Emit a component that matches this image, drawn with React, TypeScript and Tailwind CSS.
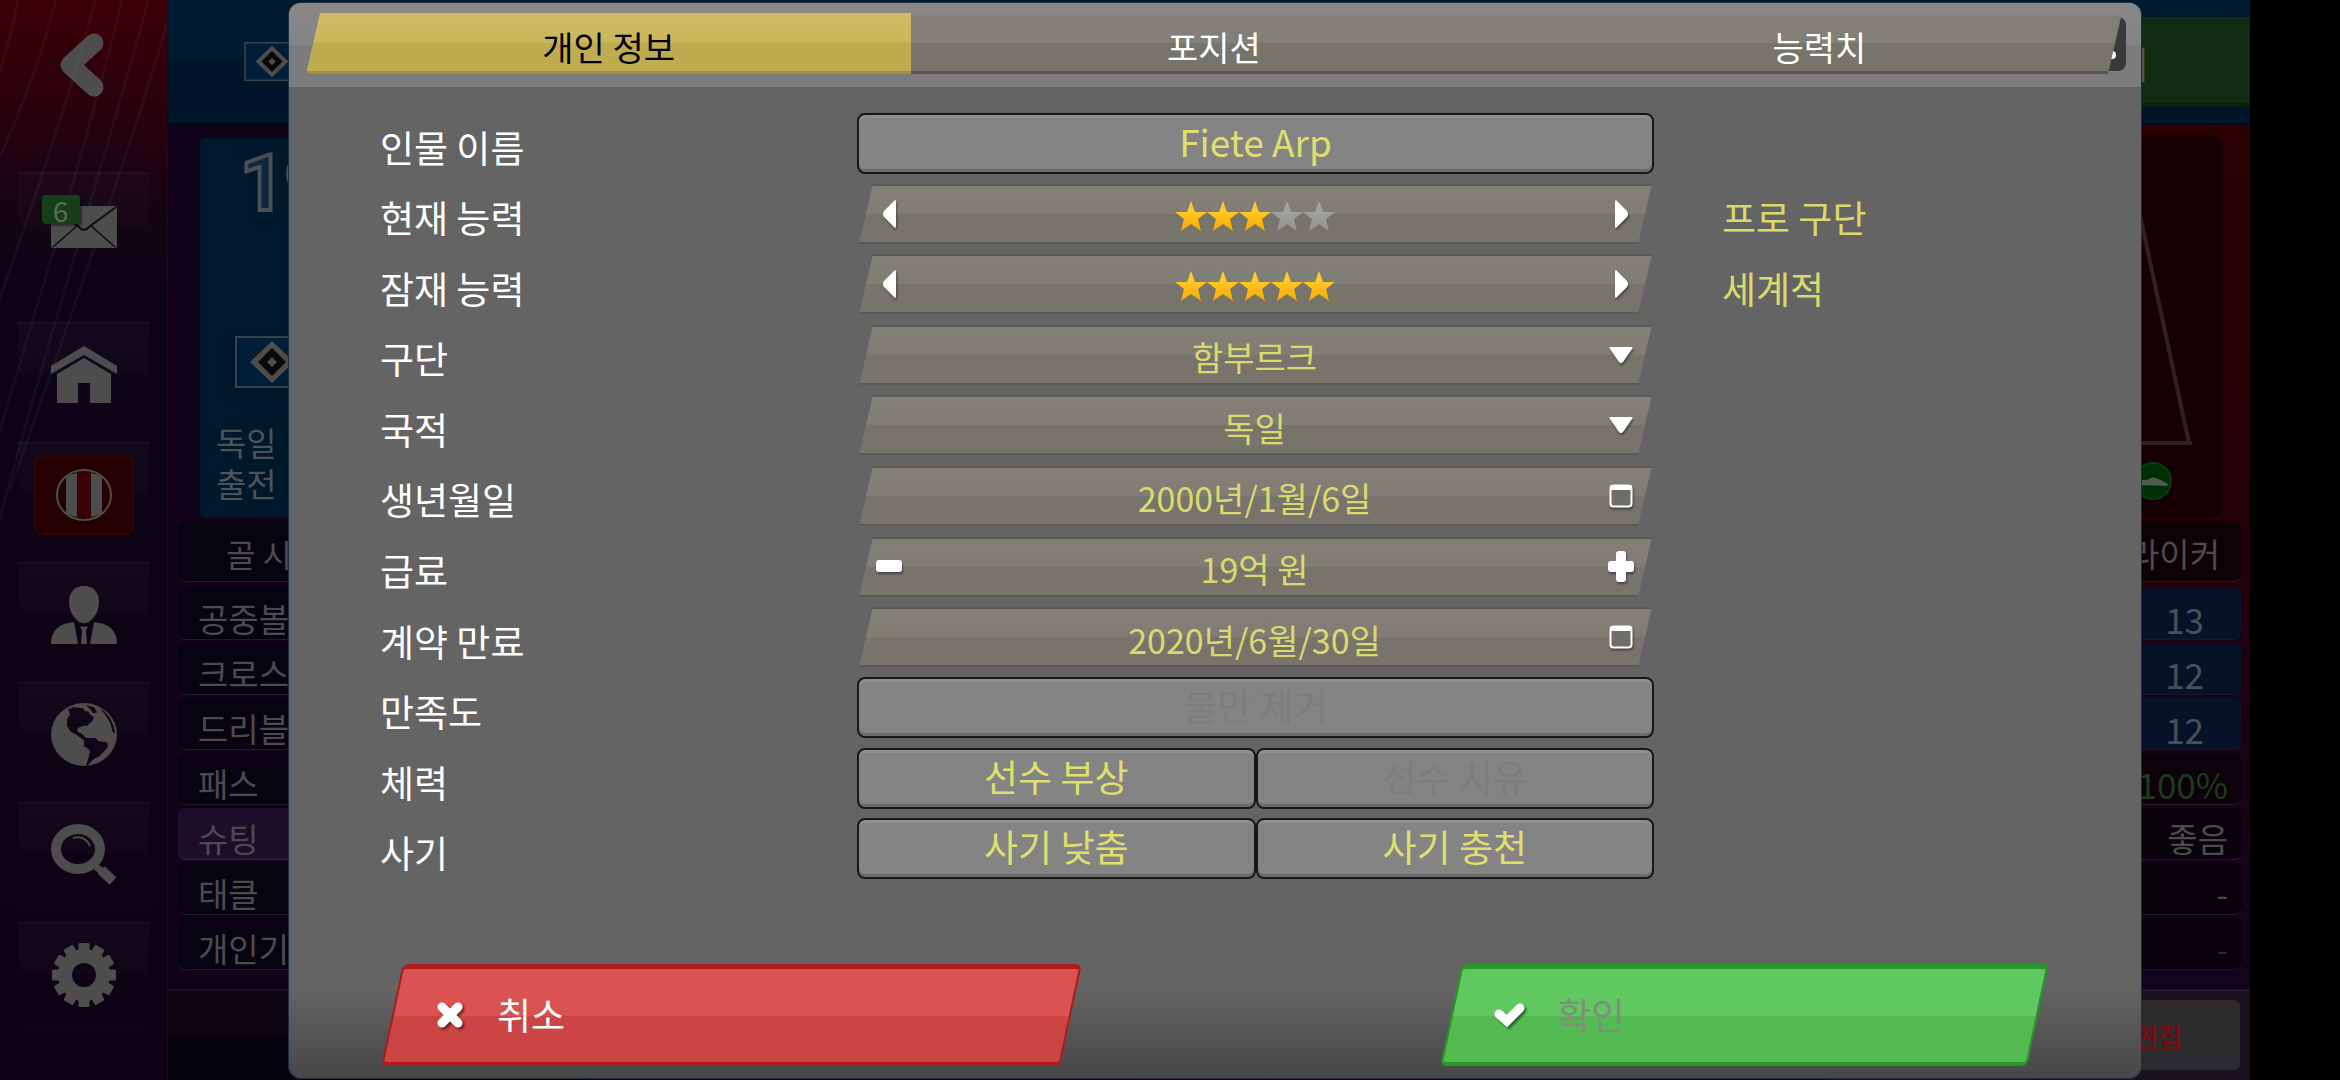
import { useState } from "react";
import type { ReactNode } from "react";

const TABS = ["개인 정보", "포지션", "능력치"];

const LEFT_STATS = ["공중볼", "크로스", "드리블", "패스", "슈팅", "태클", "개인기"];

const RIGHT_STATS = [
  { value: "13", kind: "score" },
  { value: "12", kind: "score" },
  { value: "12", kind: "score" },
  { value: "100%", kind: "good" },
  { value: "좋음", kind: "text" },
  { value: "-", kind: "text" },
  { value: "-", kind: "faint" },
];

/* ---------- icons ---------- */

function BackIcon() {
  return (
    <svg width="48" height="66" viewBox="0 0 48 66" fill="none">
      <path
        d="M36 11 L12 33 L36 55"
        stroke="#4d4d4d"
        strokeWidth="19"
        strokeLinecap="round"
        strokeLinejoin="round"
      />
    </svg>
  );
}

function MailIcon() {
  return (
    <svg width="66" height="42" viewBox="0 0 66 42">
      <rect width="66" height="42" rx="2" fill="#4d4d4d" />
      <path d="M2 41 L27 19 M64 41 L39 19" stroke="#120818" strokeWidth="1.500" />
      <path d="M1 1 L28 21 Q33 27 38 21 L65 1" stroke="#120818" strokeWidth="2" fill="none" />
    </svg>
  );
}

function HomeIcon() {
  return (
    <svg width="66" height="57" viewBox="0 0 66 57" fill="#4d4d4d">
      <path d="M0 20 L33 0 L66 20 V28 L33 9 L0 28 Z" />
      <path d="M6 28 L33 12 L60 28 V57 H39 V37 H27 V57 H6 Z" />
    </svg>
  );
}

function ClubIcon() {
  return (
    <svg width="58" height="54" viewBox="0 0 58 54">
      <ellipse cx="29" cy="27" rx="27" ry="25" fill="none" stroke="#4d4d4d" strokeWidth="2" />
      <path d="M11 9 Q16 6 22 5 V49 Q16 48 11 45 Z" fill="#4d4d4d" />
      <path d="M47 9 Q42 6 36 5 V49 Q42 48 47 45 Z" fill="#4d4d4d" />
      <path d="M23 4 H35 V50 H23 Z" fill="#3a0204" />
    </svg>
  );
}

function PersonIcon() {
  return (
    <svg width="66" height="58" viewBox="0 0 66 56" preserveAspectRatio="none" fill="#4d4d4d">
      <path d="M33 0 C43 0 48 7 48 15 C48 25 41 36 33 36 C25 36 18 25 18 15 C18 7 23 0 33 0 Z" />
      <path d="M0 56 C0 44 7 36 23 35 L27 56 Z" />
      <path d="M66 56 C66 44 59 36 43 35 L39 56 Z" />
      <path d="M29 39 H37 L35 43 L36 56 H30 L31 43 Z" />
    </svg>
  );
}

function GlobeIcon() {
  return (
    <svg width="66" height="63" viewBox="0 0 66 61" preserveAspectRatio="none">
      <ellipse cx="33" cy="30.500" rx="33" ry="30.500" fill="#4d4d4d" />
      <path
        d="M17 6 L22 4 L32 5 L34 8 L37 8 L39 11 L43 14 L41 18 L36 22 L33 22 L27 24 L26 27 L31 30 L35 34 L44 34 L48 37 L56 38 L57 42 L53 47 L48 52 L43 54 L38 59 L35 61 L37 55 L39 47 L37 44 L33 42 L33 36 L27 32 L19 27 L16 22 L16 16 L19 11 Z"
        fill="#100616"
      />
      <path d="M35 2 L43 4 L46 9 L42 10 L40 7 Z" fill="#100616" />
      <path d="M49 5 C57 10 63 18 64 30 L61 27 C61 20 56 13 49 5 Z" fill="#100616" />
    </svg>
  );
}

function SearchIcon() {
  return (
    <svg width="66" height="61" viewBox="0 0 66 61">
      <ellipse cx="27" cy="25" rx="22" ry="20" fill="none" stroke="#4d4d4d" strokeWidth="10" />
      <path d="M22 14 Q34 11 39 22" fill="none" stroke="#4d4d4d" strokeWidth="2" />
      <path d="M45 43 L52 48" stroke="#4d4d4d" strokeWidth="7" />
      <path d="M50 46 L62 57" stroke="#4d4d4d" strokeWidth="10" />
    </svg>
  );
}

function GearIcon() {
  return (
    <svg width="66" height="64" viewBox="-33 -32 66 64">
      <circle r="19" fill="none" stroke="#4d4d4d" strokeWidth="14" />
      {Array.from({ length: 12 }, (_, i) => (
        <rect
          key={i}
          x="-5.500"
          y="-32"
          width="11"
          height="12"
          rx="1.500"
          fill="#4d4d4d"
          transform={`rotate(${i * 30})`}
        />
      ))}
    </svg>
  );
}

function Crest({ className }: { className: string }) {
  return (
    <svg className={className} viewBox="0 0 74 52">
      <rect x="1" y="1" width="72" height="50" fill="#001e38" stroke="#4a4f55" strokeWidth="1.500" />
      <path d="M37 5 L59 26 L37 47 L15 26 Z" fill="#4d4d4d" />
      <path d="M37 12 L51 26 L37 40 L23 26 Z" fill="#080808" />
      <path d="M37 21 L42 26 L37 31 L32 26 Z" fill="#4d4d4d" />
    </svg>
  );
}

function Star({ filled }: { filled: boolean }) {
  return (
    <svg width="32" height="30" viewBox="0 0 32 30">
      <path
        d="M16 0 L20 11 L32 11 L23 18 L26 30 L16 23 L6 30 L9 18 L0 11 L12 11 Z"
        fill={filled ? "url(#starOn)" : "url(#starOff)"}
      />
    </svg>
  );
}

function ArrowIcon({ flip = false }: { flip?: boolean }) {
  return (
    <svg width="13" height="28" viewBox="0 0 13 28" className="drop-shadow-[1px_2px_1px_rgba(0,0,0,0.4)]">
      <path
        d={flip ? "M1 0 Q0 0 0 2 V26 Q0 28 1 28 L12 17 Q14 14 12 11 Z" : "M12 0 Q13 0 13 2 V26 Q13 28 12 28 L1 17 Q-1 14 1 11 Z"}
        fill="#fff"
      />
    </svg>
  );
}

function DownIcon() {
  return (
    <svg width="24" height="16" viewBox="0 0 24 16" className="drop-shadow-[1px_2px_1px_rgba(0,0,0,0.4)]">
      <path d="M1 0 H23 Q24 1 23 2 L14 15 Q12 17 10 15 L1 2 Q0 1 1 0 Z" fill="#fff" />
    </svg>
  );
}

function CalendarIcon() {
  return (
    <svg width="24" height="24" viewBox="0 0 24 24" className="drop-shadow-[1px_2px_1px_rgba(0,0,0,0.4)]">
      <rect x="1.500" y="1.500" width="21" height="21" rx="3" fill="#6f6d67" stroke="#fff" strokeWidth="2" />
      <path d="M1 6 V3 Q1 1 3 1 H21 Q23 1 23 3 V6 Z" fill="#fff" />
    </svg>
  );
}

function MinusIcon() {
  return (
    <svg width="26" height="13" viewBox="0 0 26 13" className="drop-shadow-[1px_2px_1px_rgba(0,0,0,0.4)]">
      <rect width="26" height="12" rx="3" fill="#fff" />
    </svg>
  );
}

function PlusIcon() {
  return (
    <svg width="26" height="31" viewBox="0 0 26 31" className="drop-shadow-[1px_2px_1px_rgba(0,0,0,0.4)]">
      <rect y="10" width="26" height="11" rx="3" fill="#fff" />
      <rect x="8" width="10" height="31" rx="3" fill="#fff" />
    </svg>
  );
}

/* ---------- screen behind the dialog ---------- */

const NAV = [
  { label: "홈", icon: <HomeIcon /> },
  { label: "구단", icon: <ClubIcon />, active: true },
  { label: "인물", icon: <PersonIcon /> },
  { label: "세계", icon: <GlobeIcon /> },
  { label: "검색", icon: <SearchIcon /> },
  { label: "설정", icon: <GearIcon /> },
];

const navItem =
  "flex w-full items-center justify-center border-t-2 border-b-2 border-t-white/5 border-b-black/25 bg-[linear-gradient(rgba(255,255,255,0.02)_0%,rgba(255,255,255,0.01)_50%,transparent_50%)]";

function Sidebar() {
  return (
    <nav className="relative flex w-[168px] shrink-0 flex-col overflow-hidden border-r border-[#1a0a22] bg-[linear-gradient(#3c0006_0px,#28020d_120px,#150413_200px,#0c0518_300px,#0d0416_500px,#0d0314_100%)] px-[18px]">
      <svg
        className="pointer-events-none absolute top-0 left-0"
        width="168"
        height="540"
        stroke="#8080a0"
        strokeOpacity="0.08"
        strokeWidth="3"
        fill="none"
      >
        <path d="M20 -10 Q10 45 -10 100" />
        <path d="M58 -10 Q40 70 -6 170" />
        <path d="M98 -10 Q70 100 -6 315" />
        <path d="M124 -10 Q100 100 -6 450" />
        <path d="M151 -10 C120 110 50 330 -6 540" />
        <path d="M168 20 C140 120 70 320 10 490" />
      </svg>
      <div className="flex h-[172px] items-start justify-center pt-8 pr-1">
        <button type="button" aria-label="뒤로">
          <BackIcon />
        </button>
      </div>
      <button type="button" aria-label="메일" className={`${navItem} mb-10 h-[110px]`}>
        <span className="relative">
          <MailIcon />
          <span className="absolute -top-[11px] -left-[9px] flex h-[29px] w-[38px] items-center justify-center rounded bg-[#173f17] text-[28px] leading-none text-[#5b685b] shadow-[2px_2px_2px_rgba(0,0,0,0.4)]">
            6
          </span>
        </span>
      </button>
      <div className="flex flex-col gap-[15px]">
        {NAV.map((item) => (
          <button key={item.label} type="button" aria-label={item.label} className={`${navItem} h-[105px]`}>
            {item.active ? (
              <span className="flex h-20 w-[100px] items-center justify-center rounded-lg border-2 border-[#340205] bg-[#250000]">
                {item.icon}
              </span>
            ) : (
              item.icon
            )}
          </button>
        ))}
      </div>
    </nav>
  );
}

function LeftColumn() {
  return (
    <div className="flex w-[420px] flex-col">
      <div className="mt-[13px] ml-8 flex h-[380px] flex-col rounded-md bg-[#00182c]">
        <div className="pt-[6px] pl-10 font-[Roboto,sans-serif] text-[78px] leading-[80px] font-bold text-[#10263a] [-webkit-text-stroke:4px_#484f55]">
          19
        </div>
        <Crest className="mt-28 ml-[35px] h-[52px] w-[74px]" />
        <p className="mt-[34px] pl-4 text-[33px] leading-[41px] text-[#4b5359]">
          독일
          <br />
          출전
        </p>
      </div>
      <div className="mt-[3px] ml-[10px] flex h-[61px] items-center rounded-lg border-b border-white/10 bg-[#080310] pt-1 pl-12 text-[32px] leading-none text-[#4b4b4e]">
        골 시
      </div>
      <ul className="mt-[6px] ml-[10px] flex flex-col gap-[3px]">
        {LEFT_STATS.map((stat) => (
          <li
            key={stat}
            className={`flex h-[52px] items-center rounded-lg border-b border-white/10 pt-[10px] pl-5 text-[33px] leading-none text-[#4b4b4e] ${
              stat === "슈팅" ? "bg-[#1c0e29]" : "bg-[#080310]"
            }`}
          >
            {stat}
          </li>
        ))}
      </ul>
      <div className="mt-auto h-[91px] border-t-2 border-[#17121c] bg-[linear-gradient(#0d0712_50%,#07030c_50%)]" />
    </div>
  );
}

function RightColumn() {
  return (
    <div className="flex w-[420px] flex-col">
      <div className="mt-[11px] mr-[27px] flex h-[382px] justify-end rounded-xl bg-[#160003]">
        <svg width="120" height="382" viewBox="0 0 120 382">
          <path d="M20 0 L86 307 M0 307 H89" stroke="#302124" strokeWidth="4" fill="none" />
          <circle cx="50" cy="345" r="18" fill="#002e05" stroke="#033f0a" strokeWidth="2" />
          <path d="M34 349 V344 L44 344 L50 341 L58 344 L65 348 L64 350 Z" fill="#4d5a4d" />
        </svg>
      </div>
      <div className="mt-[3px] mr-2 flex h-[61px] items-center justify-end rounded-lg border-b border-white/10 bg-[#0e0207] pt-1 pr-[22px] text-[33px] leading-none text-[#4b4b4e]">
        스트라이커
      </div>
      <ul className="mt-[6px] mr-2 flex flex-col gap-[3px]">
        {RIGHT_STATS.map((stat, i) => (
          <li
            key={i}
            className={`flex h-[52px] items-center justify-end rounded-lg border-b pt-[10px] leading-none ${
              stat.kind === "score"
                ? "border-[#0c1a33] bg-[#061228] pr-[38px] text-[35px] text-[#4a4f57]"
                : stat.kind === "good"
                  ? "border-white/10 bg-[#0d0209] pr-[14px] text-[35px] text-[#1d3a1d]"
                  : stat.kind === "faint"
                    ? "border-white/10 bg-[#08020d] pr-[14px] text-[33px] text-[#2e2a31]"
                    : "border-white/10 bg-[#0a020b] pr-[14px] text-[33px] text-[#4b4b4e]"
            }`}
          >
            {stat.value}
          </li>
        ))}
      </ul>
      <div className="mt-auto flex h-[91px] justify-end border-t-2 border-[#221d28] bg-[#18131f] pt-[9px] pr-[10px]">
        <button
          type="button"
          className="flex h-[70px] w-80 items-center justify-end rounded-md bg-[#2c2a2d] pr-[58px] text-[26px] font-medium text-[#7e0c0c]"
        >
          편집
        </button>
      </div>
    </div>
  );
}

function Backdrop() {
  return (
    <div className="flex flex-1">
      <Sidebar />
      <div className="flex flex-1 flex-col bg-[linear-gradient(90deg,#12031a_0%,#12031a_30%,transparent_70%),linear-gradient(#2c0003_12%,#240008_50%,#12041c_85%)]">
        <header className="flex h-[125px] items-start justify-between border-b-2 border-[#000a1c] bg-[linear-gradient(#001a2f_50%,#001529_50%)]">
          <Crest className="mt-[42px] ml-[76px] h-[39px] w-[56px]" />
          <button
            type="button"
            className="mt-[17px] flex h-[90px] w-96 items-center justify-end border-b-4 border-[#0c220d] bg-[#122c13] pt-2 pr-[101px] text-[37px] text-[#4b5a50]"
          >
            닫기
          </button>
        </header>
        <div className="flex flex-1 justify-between">
          <LeftColumn />
          <RightColumn />
        </div>
      </div>
    </div>
  );
}

/* ---------- dialog parts ---------- */

const boxStyle =
  "h-[61px] rounded-lg border-2 border-[#181818] bg-[#848484] pb-1 text-center text-[37px] leading-none text-[#dfdf6e] shadow-[inset_0_3px_0_#8f8f8f,inset_0_-3px_0_#6c6c6c] disabled:text-[#7d7d7d]";

function Row({ label, htmlFor, note, children }: { label: string; htmlFor?: string; note?: string; children: ReactNode }) {
  return (
    <div className="grid grid-cols-[477fr_797fr_487fr] items-center">
      <label htmlFor={htmlFor} className="pt-2 text-[37px] leading-none text-white">
        {label}
      </label>
      {children}
      <span className="pt-2 pl-[68px] text-[37px] leading-none text-[#dada6c]">{note}</span>
    </div>
  );
}

// slanted bar that holds an optional control on each side
function Slant({ left, right, children }: { left?: ReactNode; right?: ReactNode; children: ReactNode }) {
  return (
    <div className="relative isolate mx-[9px] flex h-[60px] items-center text-[34px] text-[#dada6c] before:absolute before:inset-0 before:-z-10 before:-skew-x-[13deg] before:border-y-2 before:border-[#5b5a55] before:bg-[linear-gradient(#838078_0%,#807d75_50%,#77746c_50%,#77746c_100%)]">
      <div className="flex w-[46px] justify-center">{left}</div>
      <div className="flex flex-1 justify-center pt-1">{children}</div>
      <div className="flex w-12 justify-center">{right}</div>
    </div>
  );
}

function StarRow({ label, count, note }: { label: string; count: number; note: string }) {
  const [stars, setStars] = useState(count);
  return (
    <Row label={label} note={note}>
      <Slant
        left={
          <button type="button" aria-label={`${label} 낮춤`} onClick={() => setStars(Math.max(1, stars - 1))}>
            <ArrowIcon />
          </button>
        }
        right={
          <button type="button" aria-label={`${label} 높임`} onClick={() => setStars(Math.min(5, stars + 1))}>
            <ArrowIcon flip />
          </button>
        }
      >
        {[1, 2, 3, 4, 5].map((n) => (
          <Star key={n} filled={n <= stars} />
        ))}
      </Slant>
    </Row>
  );
}

function SelectRow({ id, label, value }: { id: string; label: string; value: string }) {
  return (
    <Row label={label} htmlFor={id}>
      <Slant right={<DownIcon />}>
        <select id={id} defaultValue={value} className="w-full appearance-none bg-transparent [text-align-last:center]">
          <option value={value}>{value}</option>
        </select>
      </Slant>
    </Row>
  );
}

function InputRow({ id, label, value, left, right }: { id: string; label: string; value: string; left?: ReactNode; right?: ReactNode }) {
  return (
    <Row label={label} htmlFor={id}>
      <Slant left={left} right={right}>
        <input id={id} type="text" defaultValue={value} className="w-full bg-transparent text-center" />
      </Slant>
    </Row>
  );
}

function EditDialog() {
  const [tab, setTab] = useState(0);

  return (
    <div
      role="dialog"
      aria-label="선수 편집"
      className="absolute top-[3px] right-[199px] bottom-[2px] left-[289px] flex flex-col overflow-hidden rounded-xl bg-[linear-gradient(transparent_calc(100%-90px),#474747_100%)] bg-[#646464] shadow-[0_0_0_1px_#1c3040]"
    >
      {/* Tabs */}
      <div className="h-[84px] shrink-0 bg-[linear-gradient(#888888_0%,#848484_50%,#7c7c7c_50%,#7c7c7c_100%)] px-[17px] pt-[10px]">
        <div className="relative pr-[2px]">
          <div className="absolute top-1 -right-[2px] h-[54px] w-10 rounded-lg bg-[#3a3a3a]">
            <span className="absolute top-[34px] right-[10px] h-2 w-2 rounded-full bg-white" />
          </div>
          <div
            role="tablist"
            className="relative grid h-[61px] grid-cols-3 overflow-hidden rounded-md [clip-path:polygon(14px_0,100%_0,calc(100%-14px)_100%,0_100%)]"
          >
            {TABS.map((name, i) => (
              <button
                key={name}
                type="button"
                role="tab"
                aria-selected={tab === i}
                onClick={() => setTab(i)}
                className={`border-b-3 pt-[10px] text-[34px] leading-none ${
                  tab === i
                    ? "border-[#a3903f] bg-[linear-gradient(#d0bb62_0%,#cab65a_52%,#c0ac50_52%)] text-black"
                    : "border-[#5a5851] bg-[linear-gradient(#8c8982_0%,#827f77_6%,#827f77_52%,#77746c_52%)] text-white"
                }`}
              >
                {name}
              </button>
            ))}
          </div>
        </div>
      </div>

      {/* Fields */}
      <form className="grid flex-1 auto-rows-fr pt-[21px] pl-[91px]">
        <Row label="인물 이름" htmlFor="name">
          <input id="name" type="text" defaultValue="Fiete Arp" className={boxStyle} />
        </Row>
        <StarRow label="현재 능력" count={3} note="프로 구단" />
        <StarRow label="잠재 능력" count={5} note="세계적" />
        <SelectRow id="club" label="구단" value="함부르크" />
        <SelectRow id="nation" label="국적" value="독일" />
        <InputRow id="birth" label="생년월일" value="2000년/1월/6일" right={<CalendarIcon />} />
        <InputRow
          id="wage"
          label="급료"
          value="19억 원"
          left={
            <button type="button" aria-label="급료 낮춤">
              <MinusIcon />
            </button>
          }
          right={
            <button type="button" aria-label="급료 높임">
              <PlusIcon />
            </button>
          }
        />
        <InputRow id="contract" label="계약 만료" value="2020년/6월/30일" right={<CalendarIcon />} />
        <Row label="만족도" htmlFor="happiness">
          <button id="happiness" type="button" disabled className={boxStyle}>
            불만 제거
          </button>
        </Row>
        <Row label="체력" htmlFor="injure">
          <div className="grid grid-cols-2">
            <button id="injure" type="button" className={boxStyle}>
              선수 부상
            </button>
            <button type="button" disabled className={boxStyle}>
              선수 치유
            </button>
          </div>
        </Row>
        <Row label="사기" htmlFor="morale">
          <div className="grid grid-cols-2">
            <button id="morale" type="button" className={boxStyle}>
              사기 낮춤
            </button>
            <button type="button" className={boxStyle}>
              사기 충천
            </button>
          </div>
        </Row>
      </form>

      {/* Footer actions */}
      <div className="mt-20 mb-3 grid shrink-0 grid-cols-[679fr_380fr_587fr] px-[103px]">
        <button
          type="button"
          className="relative isolate flex h-[102px] items-center pl-[44px] text-[37px] text-white before:absolute before:inset-0 before:-z-10 before:-skew-x-12 before:rounded-md before:border-x-2 before:border-t-5 before:border-b-4 before:border-[#b01c1c] before:bg-[linear-gradient(#da5252_50%,#cb4545_50%)]"
        >
          <svg width="29" height="27" viewBox="0 0 29 27" className="drop-shadow-[2px_2px_1px_rgba(0,0,0,0.5)]">
            <path d="M6 5 L22 21 M22 5 L6 21" stroke="#fff" strokeWidth="9" strokeLinecap="round" />
          </svg>
          <span className="pl-8">취소</span>
        </button>
        <button
          type="button"
          className="relative isolate col-start-3 flex h-[102px] items-center pl-[43px] text-[37px] text-[#7f8f7c] before:absolute before:inset-0 before:-z-10 before:-skew-x-12 before:rounded-md before:border-x-2 before:border-t-5 before:border-b-4 before:border-[#289928] before:bg-[linear-gradient(#60c860_50%,#54ba54_50%)]"
        >
          <svg width="31" height="26" viewBox="0 0 31 26" className="drop-shadow-[2px_2px_1px_rgba(0,0,0,0.5)]">
            <path d="M5 12 L13 19 L26 6" stroke="#fff" strokeWidth="9" strokeLinecap="round" strokeLinejoin="miter" fill="none" />
          </svg>
          <span className="pl-8">확인</span>
        </button>
      </div>
    </div>
  );
}

export default function App() {
  return (
    <div className='relative flex min-h-screen bg-black pr-[90px] font-["Noto_Sans_CJK_KR",sans-serif]'>
      <svg width="0" height="0" className="absolute">
        <defs>
          <linearGradient id="starOn" x1="0" y1="0" x2="0" y2="1">
            <stop offset="0" stopColor="#ffd23a" />
            <stop offset="0.500" stopColor="#ffc21a" />
            <stop offset="1" stopColor="#f5a800" />
          </linearGradient>
          <linearGradient id="starOff" x1="0" y1="0" x2="0" y2="1">
            <stop offset="0" stopColor="#a8a7a4" />
            <stop offset="1" stopColor="#94938f" />
          </linearGradient>
        </defs>
      </svg>
      <Backdrop />
      <EditDialog />
    </div>
  );
}
